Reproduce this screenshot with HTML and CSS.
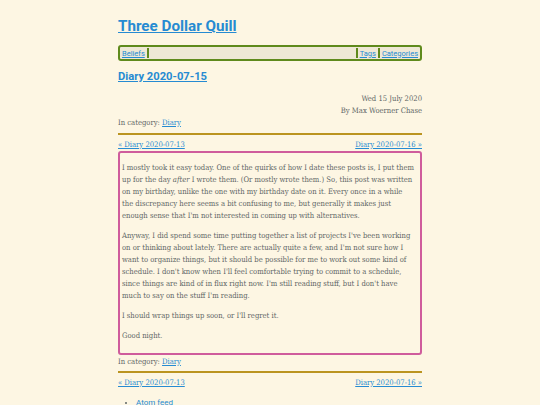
FILE: index.html
```html
<!DOCTYPE html>
<html>
<head>
<meta charset="utf-8">
<link rel="stylesheet" href="styles.css">
</head>
<body>
<div class="page">
  <h1 class="site-title"><a href="#">Three Dollar Quill</a></h1>
  <nav class="topnav">
    <a href="#">Beliefs</a><span class="sep"></span>
    <span class="spacer"></span>
    <span class="sep"></span><a href="#">Tags</a><span class="sep"></span><a href="#">Categories</a>
  </nav>
  <h2 class="post-title"><a href="#">Diary 2020-07-15</a></h2>
  <div class="meta">
    <div>Wed 15 July 2020</div>
    <div>By Max Woerner Chase</div>
  </div>
  <div class="category">In category: <a href="#">Diary</a></div>
  <div class="pager">
    <a href="#">« Diary 2020-07-13</a>
    <a href="#">Diary 2020-07-16 »</a>
  </div>
  <article class="entry">
    <p>I mostly took it easy today. One of the quirks of how I date these posts is, I put them up for the day <em>after</em> I wrote them. (Or mostly wrote them.) So, this post was written on my birthday, unlike the one with my birthday date on it. Every once in a while the discrepancy here seems a bit confusing to me, but generally it makes just enough sense that I'm not interested in coming up with alternatives.</p>
    <p>Anyway, I did spend some time putting together a list of projects I've been working on or thinking about lately. There are actually quite a few, and I'm not sure how I want to organize things, but it should be possible for me to work out some kind of schedule. I don't know when I'll feel comfortable trying to commit to a schedule, since things are kind of in flux right now. I'm still reading stuff, but I don't have much to say on the stuff I'm reading.</p>
    <p>I should wrap things up soon, or I'll regret it.</p>
    <p>Good night.</p>
  </article>
  <div class="category after">In category: <a href="#">Diary</a></div>
  <div class="pager bottom">
    <a href="#">« Diary 2020-07-13</a>
    <a href="#">Diary 2020-07-16 »</a>
  </div>
  <ul class="feeds">
    <li><a href="#">Atom feed</a></li>
  </ul>
</div>
</body>
</html>
```
FILE: styles.css
```css
html, body {
  margin: 0;
  padding: 0;
  background: #fdf6e3;
}
body {
  font-family: "DejaVu Serif", serif;
  font-stretch: condensed;
  font-size: 7.6px;
  color: #5e6666;
}
a {
  color: #268bd2;
}
.page {
  width: 304px;
  margin: 0 auto;
  padding-top: 15px;
}
.site-title {
  margin: 0;
  font-family: "Roboto", sans-serif;
  font-stretch: normal;
  font-weight: 700;
  font-size: 15.2px;
  line-height: 22px;
}
.topnav {
  margin-top: 8px;
  display: flex;
  align-items: center;
  height: 12px;
  border: 2px solid #5f8a1c;
  border-radius: 3px;
  background: #eee8d5;
  padding: 0 1px;
  font-family: "Roboto", sans-serif;
  font-stretch: normal;
  font-size: 7.5px;
}
.topnav a {
  padding: 0 1px;
}
.sep {
  width: 2px;
  height: 10px;
  background: #5f8a1c;
  margin: 0 1px;
}
.spacer {
  flex: 1;
}
.post-title {
  margin: 8px 0 0;
  font-family: "Roboto", sans-serif;
  font-stretch: normal;
  font-weight: 700;
  font-size: 11.2px;
  line-height: 16px;
}
.meta {
  margin-top: 8px;
  text-align: right;
  line-height: 12px;
}
.category {
  line-height: 12px;
}
.pager {
  margin-top: 4px;
  border-top: 2px solid #bb9420;
  padding-top: 4px;
  display: flex;
  justify-content: space-between;
  line-height: 12px;
}
.entry {
  margin-top: 0;
  border: 2px solid #cf5c9c;
  border-radius: 3px;
  padding: 1px 5px 3px 2px;
  line-height: 12px;
}
.entry p {
  margin: 8px 0;
}
.category.after {
  margin-top: 1px;
}
.pager.bottom {
  margin-top: 3px;
}
.feeds {
  margin: 8px 0 0;
  padding-left: 18px;
  font-family: "Roboto", sans-serif;
  font-stretch: normal;
  font-size: 8px;
  line-height: 12px;
}
```
